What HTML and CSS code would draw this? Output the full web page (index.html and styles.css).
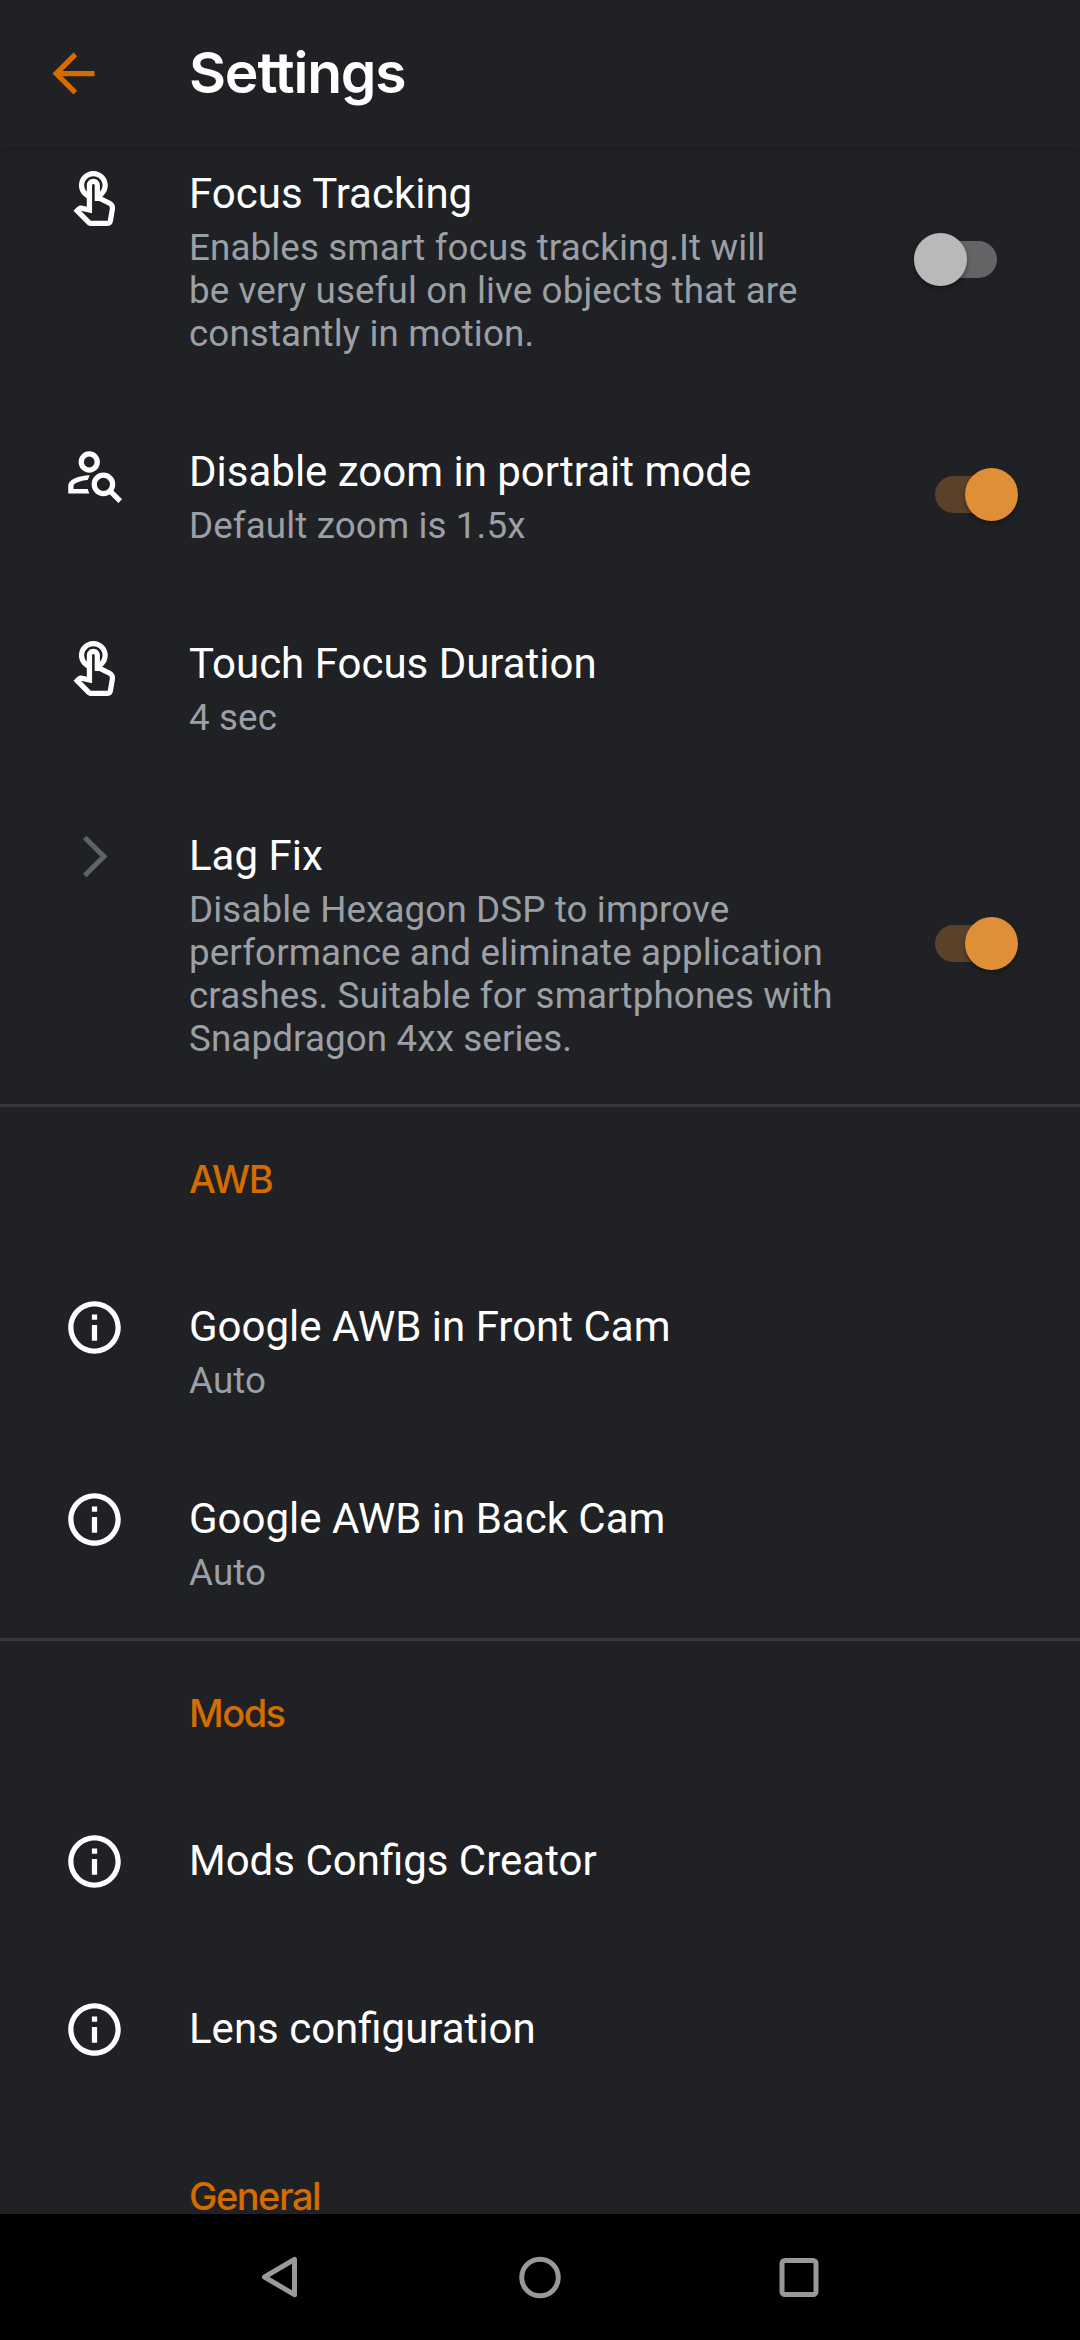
FILE: index.html
```html
<!DOCTYPE html>
<html lang="en">
<head>
<meta charset="utf-8">
<title>Settings</title>
<link rel="stylesheet" href="styles.css">
</head>
<body>
<svg class="defs" aria-hidden="true">
  <symbol id="touch" viewBox="0 0 24 24"><path transform="translate(0 2)" d="M18.19 12.44l-3.24-1.62c1.29-1 2.12-2.56 2.12-4.32 0-3.03-2.47-5.5-5.5-5.5s-5.5 2.47-5.5 5.5c0 2.13 1.22 3.98 3 4.89v3.26c-2.15-.46-2.02-.44-2.26-.44-.53 0-1.03.21-1.41.59L4 16.22l5.09 5.09c.43.44 1.03.69 1.65.69h6.3c.98 0 1.81-.7 1.97-1.67l.8-4.71c.22-1.3-.43-2.58-1.62-3.18zm-.35 2.85l-.8 4.71h-6.3c-.09 0-.17-.04-.24-.1l-3.68-3.68 4.25.89V6.5c0-.28.22-.5.5-.5s.5.22.5.5v6h1.76l3.46 1.73c.4.2.62.63.55 1.06zM8.07 6.5c0-1.93 1.57-3.5 3.5-3.5s3.5 1.57 3.5 3.5c0 .95-.38 1.81-1 2.44V6.5c0-1.38-1.12-2.5-2.5-2.5s-2.5 1.12-2.5 2.5v2.44c-.62-.63-1-1.49-1-2.44z"/></symbol>
  <symbol id="info" viewBox="0 0 24 24"><path d="M11 7h2v2h-2zm0 4h2v6h-2zm1-9C6.48 2 2 6.48 2 12s4.48 10 10 10 10-4.48 10-10S17.52 2 12 2zm0 18c-4.41 0-8-3.59-8-8s3.59-8 8-8 8 3.59 8 8-3.59 8-8 8z"/></symbol>
</svg>
<div class="screen">
  <header class="bar">
    <svg class="back" viewBox="0 0 24 24"><path d="M20 11H7.83l5.59-5.59L12 4l-8 8 8 8 1.41-1.41L7.83 13H20z"/></svg>
    <h1 class="bar-title">Settings</h1>
  </header>
  <main class="viewport">
    <div class="list">
      <div class="row">
        <svg class="icon"><use href="#touch"/></svg>
        <div class="text">
          <div class="title">Focus Tracking</div>
          <div class="summary">Enables smart focus tracking.It will<br>be very useful on live objects that are<br>constantly in motion.</div>
        </div>
        <div class="switch off"><span class="knob"></span></div>
      </div>
      <div class="row">
        <svg class="icon" viewBox="0 0 24 24"><g fill="none" stroke="#fff" stroke-width="2"><circle cx="10" cy="8" r="3.050"/><circle cx="15.400" cy="16.500" r="3.500"/><path d="M17.900 19l3.900 3.900"/></g><path fill-rule="evenodd" d="M10.200 13C6 13.100 2 14.700 2 17v3h8l-.6-1.700H4V17c0-.7 2.600-1.900 5.400-2.100z"/></svg>
        <div class="text">
          <div class="title">Disable zoom in portrait mode</div>
          <div class="summary">Default zoom is 1.5x</div>
        </div>
        <div class="switch on"><span class="knob"></span></div>
      </div>
      <div class="row">
        <svg class="icon"><use href="#touch"/></svg>
        <div class="text">
          <div class="title">Touch Focus Duration</div>
          <div class="summary">4 sec</div>
        </div>
      </div>
      <div class="row">
        <svg class="icon" viewBox="0 0 24 24"><path fill="none" stroke="#5f6368" stroke-width="1.9" d="M8.280 4.740L15.600 12l-7.320 7.260"/></svg>
        <div class="text">
          <div class="title">Lag Fix</div>
          <div class="summary">Disable Hexagon DSP to improve<br>performance and eliminate application<br>crashes. Suitable for smartphones with<br>Snapdragon 4xx series.</div>
        </div>
        <div class="switch on"><span class="knob"></span></div>
      </div>
      <h2 class="category ruled">AWB</h2>
      <div class="row">
        <svg class="icon"><use href="#info"/></svg>
        <div class="text">
          <div class="title">Google AWB in Front Cam</div>
          <div class="summary">Auto</div>
        </div>
      </div>
      <div class="row">
        <svg class="icon"><use href="#info"/></svg>
        <div class="text">
          <div class="title">Google AWB in Back Cam</div>
          <div class="summary">Auto</div>
        </div>
      </div>
      <h2 class="category ruled">Mods</h2>
      <div class="row single">
        <svg class="icon"><use href="#info"/></svg>
        <div class="text"><div class="title">Mods Configs Creator</div></div>
      </div>
      <div class="row single">
        <svg class="icon"><use href="#info"/></svg>
        <div class="text"><div class="title">Lens configuration</div></div>
      </div>
      <h2 class="category">General</h2>
    </div>
  </main>
  <nav class="nav">
    <svg class="nav-icon" viewBox="0 0 60 60"><path d="M43.500 12.300v35.400L13.500 30z"/></svg>
    <svg class="nav-icon" viewBox="0 0 60 60"><circle cx="30" cy="30.500" r="18.300"/></svg>
    <svg class="nav-icon" viewBox="0 0 60 60"><rect x="13" y="13.500" width="34" height="34" rx="3"/></svg>
  </nav>
</div>
</body>
</html>
```

FILE: styles.css
```css
* { box-sizing: border-box; }

body {
  margin: 0;
  background: #202124;
  color: #fff;
  font-family: Roboto, "Noto Sans", sans-serif;
}

.defs { display: none; }

.screen {
  display: flex;
  flex-direction: column;
  width: 1080px;
  height: 2340px;
  overflow: hidden;
}

.bar {
  display: flex;
  align-items: center;
  flex: none;
  height: 147px;
  padding-left: 42px;
  box-shadow: 0 2px 8px rgba(0, 0, 0, 0.15);
  z-index: 1;
}

.back {
  width: 63px;
  height: 63px;
  fill: #d56c00;
}

.bar-title {
  margin: -2px 0 0 84px;
  font: 600 57px/70px Inter, sans-serif;
  letter-spacing: -1.2px;
}

.viewport {
  flex: none;
  height: 2067px;
  overflow: hidden;
}

.list { margin-top: -26px; }

.row {
  display: flex;
  align-items: flex-start;
  padding: 48px 62px 44px 63px;
}

.icon {
  flex: none;
  width: 63px;
  height: 63px;
  margin: -6px 63px -6px 0;
  fill: #fff;
}

.text { flex: 1; }

.title {
  font-size: 42px;
  line-height: 49px;
  white-space: nowrap;
}

.single { height: 168px; }

.summary {
  margin-top: 8px;
  color: #9aa0a6;
  font-size: 36.75px;
  line-height: 43px;
  letter-spacing: 0.12px;
  white-space: nowrap;
}

.switch {
  display: flex;
  align-items: center;
  align-self: center;
  flex: none;
  width: 83px;
  height: 37px;
  margin-bottom: 5px;
  border-radius: 19px;
}

.knob {
  width: 53px;
  height: 53px;
  border-radius: 50%;
  box-shadow: 0 3px 5px rgba(0, 0, 0, 0.35);
}

.off {
  margin-right: 21px;
  background: linear-gradient(90deg, transparent 20px, #636466 20px);
}

.off .knob { background: #b9b9b9; }

.on {
  justify-content: flex-end;
  background: linear-gradient(270deg, transparent 20px, #5a422a 20px);
}

.on .knob { background: #df8f35; }

.category {
  height: 150px;
  margin: 0;
  padding: 49px 0 0 189px;
  color: #d56c00;
  font: 500 38px/46px Inter, sans-serif;
  letter-spacing: -1.5px;
}

.ruled { border-top: 3px solid #36373b; }

.nav {
  display: flex;
  justify-content: center;
  align-items: center;
  gap: 199px;
  flex: none;
  height: 126px;
  background: #000;
}

.nav-icon {
  width: 60px;
  height: 60px;
  fill: none;
  stroke: #999;
  stroke-width: 5;
  stroke-linejoin: round;
}
```
